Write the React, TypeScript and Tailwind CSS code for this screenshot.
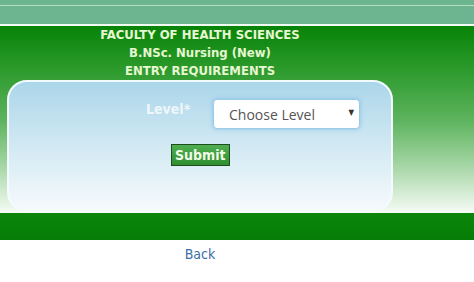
import { useState } from 'react'

export default function App() {
  const [level, setLevel] = useState('')

  return (
    <div className="w-[474px] h-[282px] bg-white font-['DejaVu_Sans_Condensed','DejaVu_Sans',sans-serif] overflow-hidden">
      {/* Top bars */}
      <div className="h-[5px] bg-[#6cb68f]" />
      <div className="h-px bg-[#b4dcc2]" />
      <div className="h-[18px] bg-[#6db590]" />
      <div className="h-[2px] bg-[#f2faf4]" />

      {/* Main green gradient */}
      <div className="h-[187px] bg-[linear-gradient(to_bottom,#078307_0%,#2f9c2f_25%,#5cb35c_50%,#a6d6a6_75%,#f6fbf6_100%)]">
        <div className="w-[400px] text-center text-[#e6f7d2] text-[13px] leading-[18px] font-bold">
          <div>FACULTY OF HEALTH SCIENCES</div>
          <div>B.NSc. Nursing (New)</div>
          <div>ENTRY REQUIREMENTS</div>
        </div>

        <div className="ml-[7px] w-[386px] h-[132px] rounded-[20px] border-2 border-[#f4fbff] bg-[linear-gradient(to_bottom,#abd6ea_0%,#d2e9f3_50%,#f6fafc_100%)]">
          <div className="flex items-start pt-[17px]">
            <label className="ml-[137px] w-[67px] text-[14px] font-bold text-[#eef6fa] leading-[18px] mt-[1px]">
              Level*
            </label>
            <div className="relative">
              <select
                value={level}
                onChange={(e) => setLevel(e.target.value)}
                className="appearance-none w-[147px] h-[30px] rounded-[4px] border border-[#9ccbe8] bg-white pl-[15px] text-[14px] text-[#555] font-['Open_Sans',sans-serif] shadow-[0_0_4px_rgba(102,175,233,0.6)] outline-none"
              >
                <option value="">Choose Level</option>
                <option value="1">Level 100</option>
                <option value="2">Level 200</option>
              </select>
              <span className="absolute right-[6px] top-[8px] text-[8px] text-[#333] pointer-events-none">▼</span>
            </div>
          </div>
          <div className="pl-[162px] pt-[14px]">
            <button
              type="button"
              className="h-[22px] px-[3px] border border-[#1e4e1e] bg-[linear-gradient(to_bottom,#4fae4f,#2f8f2f)] text-[#f0fbe8] text-[14px] font-bold leading-[18px]"
            >
              Submit
            </button>
          </div>
        </div>
      </div>

      {/* Bottom band */}
      <div className="h-[27px] bg-[linear-gradient(to_bottom,#0a860a,#067d06)]" />

      <div className="w-[400px] text-center pt-[2px]">
        <a href="#" className="text-[14px] text-[#3a6ea5]">Back</a>
      </div>
    </div>
  )
}
